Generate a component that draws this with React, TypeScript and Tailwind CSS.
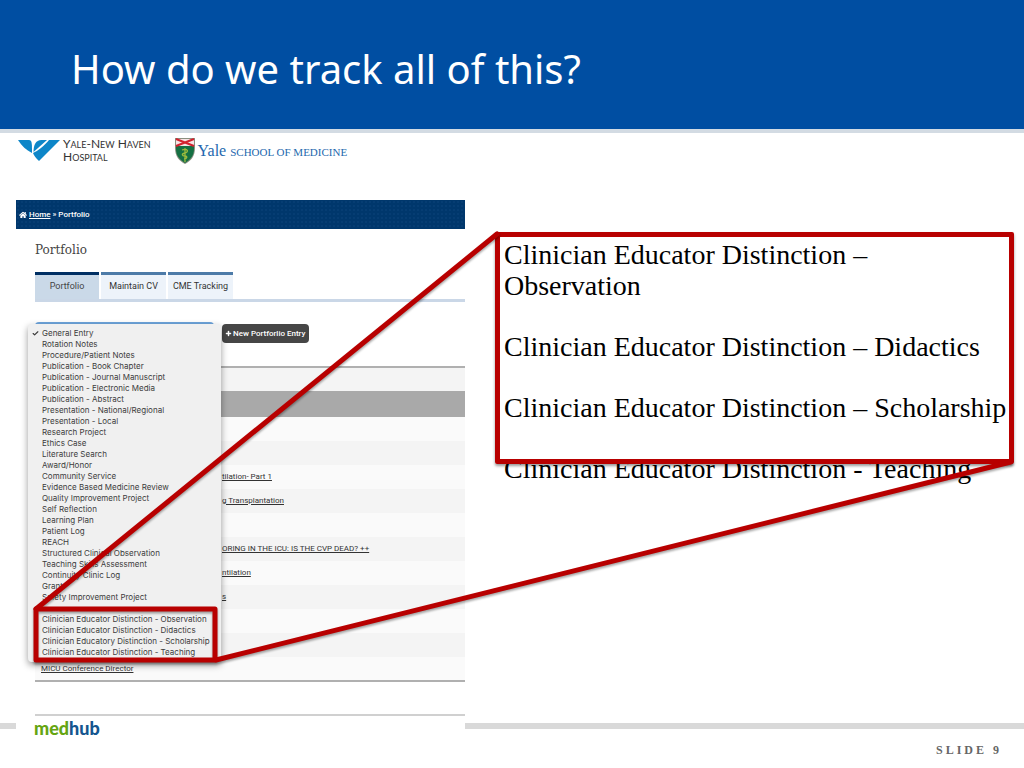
import { Check, Plus } from "lucide-react";
import { FaHome } from "react-icons/fa";

interface PortfolioRow {
	id: number;
	title: string;
	indent: boolean;
}

const tabs: readonly string[] = ["Portfolio", "Maintain CV", "CME Tracking"];

const entryTypes: readonly string[] = [
	"General Entry",
	"Rotation Notes",
	"Procedure/Patient Notes",
	"Publication - Book Chapter",
	"Publication - Journal Manuscript",
	"Publication - Electronic Media",
	"Publication - Abstract",
	"Presentation - National/Regional",
	"Presentation - Local",
	"Research Project",
	"Ethics Case",
	"Literature Search",
	"Award/Honor",
	"Community Service",
	"Evidence Based Medicine Review",
	"Quality Improvement Project",
	"Self Reflection",
	"Learning Plan",
	"Patient Log",
	"REACH",
	"Structured Clinical Observation",
	"Teaching Skills Assessment",
	"Continuity Clinic Log",
	"Grant",
	"Safety Improvement Project",
];

const distinctionTypes: readonly string[] = [
	"Clinician Educator Distinction - Observation",
	"Clinician Educator Distinction - Didactics",
	"Clinician Educatory Distinction - Scholarship",
	"Clinician Educator Distinction - Teaching",
];

const rows: readonly PortfolioRow[] = [
	{ id: 1, title: "", indent: true },
	{ id: 2, title: "", indent: true },
	{ id: 3, title: "tilation- Part 1", indent: true },
	{ id: 4, title: "g Transplantation", indent: true },
	{ id: 5, title: "", indent: true },
	{ id: 6, title: "ORING IN THE ICU: IS THE CVP DEAD? ++", indent: true },
	{ id: 7, title: "ntilation", indent: true },
	{ id: 8, title: "s", indent: true },
	{ id: 9, title: "", indent: true },
	{ id: 10, title: "", indent: true },
	{ id: 11, title: "MICU Conference Director", indent: false },
];

const HospitalLogo = () => (
	<div className="flex items-start gap-[3px]">
		<svg width="42" height="24" viewBox="0 0 42 24" aria-hidden="true">
			<path d="M0 2h11c3 0 3 3 3 13C8 12 4 8 0 2Z" fill="#0d86c8" />
			<path d="M15.500 14c0-7 2-12 8-12h5.500Z" fill="#0d86c8" />
			<path d="M31 2h11L21 23c-3-3-5-5-6-8 5-2 11-7 16-13Z" fill="#0d86c8" />
		</svg>
		<p className="font-['Lato',sans-serif] text-xs leading-3 text-[#333] whitespace-nowrap">
			Y<span className="text-[9px]">ALE</span>-N
			<span className="text-[9px]">EW</span> H
			<span className="text-[9px]">AVEN</span>
			<br />H<span className="text-[9px]">OSPITAL</span>
		</p>
	</div>
);

const SchoolLogo = () => (
	<div className="flex items-center gap-[3px]">
		<svg width="20" height="26" viewBox="0 0 20 26" aria-hidden="true">
			<path d="M0 0h20v10c0 8-4 13-10 16C4 23 0 18 0 10Z" fill="#8b8f80" />
			<path d="M1 8h18v3c0 7-4 11-9 14-5-3-9-7-9-14Z" fill="#157043" />
			<path d="M1 1h18v7H1Z" fill="#f5e5e5" />
			<path d="m1 1 18 7M19 1 1 8" stroke="#d3222f" strokeWidth="2" />
			<path
				d="M10 10v14M7 12c6-2 7 2 3 3s-3 3 0 3 2 3-1 3"
				stroke="#9dbb3d"
				strokeWidth="1.300"
				fill="none"
			/>
		</svg>
		<p className="font-['Liberation_Serif',serif] text-base leading-5 text-[#2468ae] whitespace-nowrap">
			Yale <span className="text-[11px]">SCHOOL OF MEDICINE</span>
		</p>
	</div>
);

const EntryTypeMenu = () => (
	<div
		role="listbox"
		aria-label="Entry types"
		className="absolute top-0 -left-[7px] w-[193px] rounded bg-[#f0f0f0] py-1 shadow-[0_3px_7px_rgba(0,0,0,0.4)] font-['Inter',sans-serif] text-[8px] leading-[11px] text-[#3c3c3c]"
	>
		{entryTypes.map((name, index) => (
			<button
				type="button"
				role="option"
				aria-selected={index === 0}
				key={name}
				className="flex w-full items-center text-left whitespace-nowrap"
			>
				<span className="w-[14px] pl-1">
					{index === 0 && <Check size={7} strokeWidth={4} />}
				</span>
				{name}
			</button>
		))}
		<div className="mt-[11px]">
			{distinctionTypes.map((name) => (
				<button
					type="button"
					role="option"
					aria-selected={false}
					key={name}
					className="block w-full pl-[14px] text-left whitespace-nowrap"
				>
					{name}
				</button>
			))}
		</div>
	</div>
);

const PortfolioPanel = () => (
	<section className="w-[449px] shrink-0 bg-white font-['Roboto',sans-serif]">
		<nav className="flex h-[29px] items-center gap-[2px] bg-[#00376c] bg-[radial-gradient(#063d73_1px,transparent_1px)] bg-[size:4px_4px] pl-[3px] text-[8px] font-medium text-white">
			<FaHome size={8} />
			<a href="#home" className="underline">
				Home
			</a>
			<span>» Portfolio</span>
		</nav>
		<div className="pl-[19px]">
			<h2 className="mt-[13px] mb-[14px] font-['DejaVu_Serif',serif] text-xs leading-4 text-[#444]">
				Portfolio
			</h2>
			<div className="flex gap-[2px] border-b-3 border-[#cad7e7]">
				{tabs.map((name, index) => (
					<button
						type="button"
						key={name}
						className={
							index === 0
								? "h-[27px] w-16 border-t-3 border-[#002f63] bg-[#cad9e8] text-[9px] text-[#444]"
								: "h-[27px] w-[65px] border-t-3 border-[#4d7ba8] bg-[#edf3fa] text-[9px] text-[#333] whitespace-nowrap"
						}
					>
						{name}
					</button>
				))}
			</div>
			<div className="relative z-10 mt-5 flex h-11 items-start">
				<select
					aria-label="Entry type"
					className="h-5 w-[179px] appearance-none rounded border-t-2 border-[#6ea5dc] bg-white text-[8px]"
				>
					<option>General Entry</option>
				</select>
				<button
					type="button"
					className="mt-[2px] ml-2 flex h-[19px] w-[87px] items-center gap-[1px] rounded-sm bg-[#464646] pl-[3px] text-[8px] font-medium text-white whitespace-nowrap"
				>
					<Plus size={7} strokeWidth={5} />
					New Portforlio Entry
				</button>
				<div className="absolute top-[2px] left-0">
					<EntryTypeMenu />
				</div>
			</div>
			<table className="w-full border-collapse border-t-2 border-b-2 border-[#b0b0b0] text-[8px] text-[#333]">
				<thead>
					<tr className="h-6 bg-[#f4f4f4]">
						<td />
					</tr>
					<tr className="h-[26px] bg-[#a9a9a9]">
						<td />
					</tr>
				</thead>
				<tbody>
					{rows.map((row) => (
						<tr key={row.id} className="h-6 odd:bg-[#fafafa] even:bg-[#f4f4f4]">
							<td className={row.indent ? "pl-[187px]" : "pl-[6px]"}>
								<a href={`#entry-${row.id}`} className="underline">
									{row.title}
								</a>
							</td>
						</tr>
					))}
				</tbody>
			</table>
			<div className="mt-8 border-t-2 border-[#d0d0d0]" />
		</div>
	</section>
);

const Callout = () => (
	<section className="relative mt-8 mr-[10px] ml-[30px] flex-1 pt-[7px] pl-[9px]">
		<div className="font-['Liberation_Serif',serif] text-[28px] leading-[31px] text-black">
			<p>
				Clinician Educator Distinction –<br />
				Observation
			</p>
			<p className="mt-[30px] whitespace-nowrap">
				Clinician Educator Distinction – Didactics
			</p>
			<p className="mt-[30px] whitespace-nowrap">
				Clinician Educator Distinction – Scholarship
			</p>
			<p className="mt-[30px] whitespace-nowrap">
				Clinician Educator Distinction - Teaching
			</p>
		</div>
		<div className="pointer-events-none absolute inset-x-0 top-0 h-[232px] rounded-xs border-5 border-[#b80000] shadow-[0_2px_3px_rgba(0,0,0,0.4)]" />
	</section>
);

// Red frame round the distinction entries, with lines out to the callout
const Connectors = () => (
	<svg
		className="pointer-events-none absolute inset-0 z-20 h-full w-full drop-shadow-[0_2px_1px_rgba(0,0,0,0.35)]"
		stroke="#b80000"
		strokeWidth="5"
		strokeLinejoin="round"
		strokeLinecap="round"
		fill="none"
		aria-hidden="true"
	>
		<rect x="36" y="609" width="179" height="51" />
		<line x1="36" y1="609" x2="497" y2="234" />
		<line x1="216" y1="660" x2="98.700%" y2="462" />
	</svg>
);

const App = () => (
	<div className="relative flex min-h-screen flex-col overflow-hidden bg-white">
		<header className="h-[133px] border-b-4 border-[#d3dbe3] bg-[#004ea2] pt-[42px] pl-[71px]">
			<h1 className="font-['Noto_Sans',sans-serif] text-[40px] leading-[54px] text-white">
				How do we track all of this?
			</h1>
		</header>
		<div className="flex h-[67px] items-start gap-6 pt-[5px] pl-[18px]">
			<HospitalLogo />
			<SchoolLogo />
		</div>
		<main className="flex items-start pl-4">
			<PortfolioPanel />
			<Callout />
		</main>
		<footer>
			<div className="flex items-start">
				<div className="mt-[7px] h-[6px] w-4 bg-[#d9d9d9]" />
				<p className="w-[449px] pl-[18px] font-['Lato',sans-serif] text-lg leading-6 font-black text-[#65a512]">
					med<span className="text-[#15568f]">hub</span>
				</p>
				<div className="mt-[7px] h-[6px] flex-1 bg-[#d9d9d9]" />
			</div>
			<p className="pr-[22px] text-right font-['Liberation_Serif',serif] text-xs leading-5 font-bold tracking-[3px] text-[#666]">
				SLIDE 9
			</p>
		</footer>
		<Connectors />
	</div>
);

export default App;
